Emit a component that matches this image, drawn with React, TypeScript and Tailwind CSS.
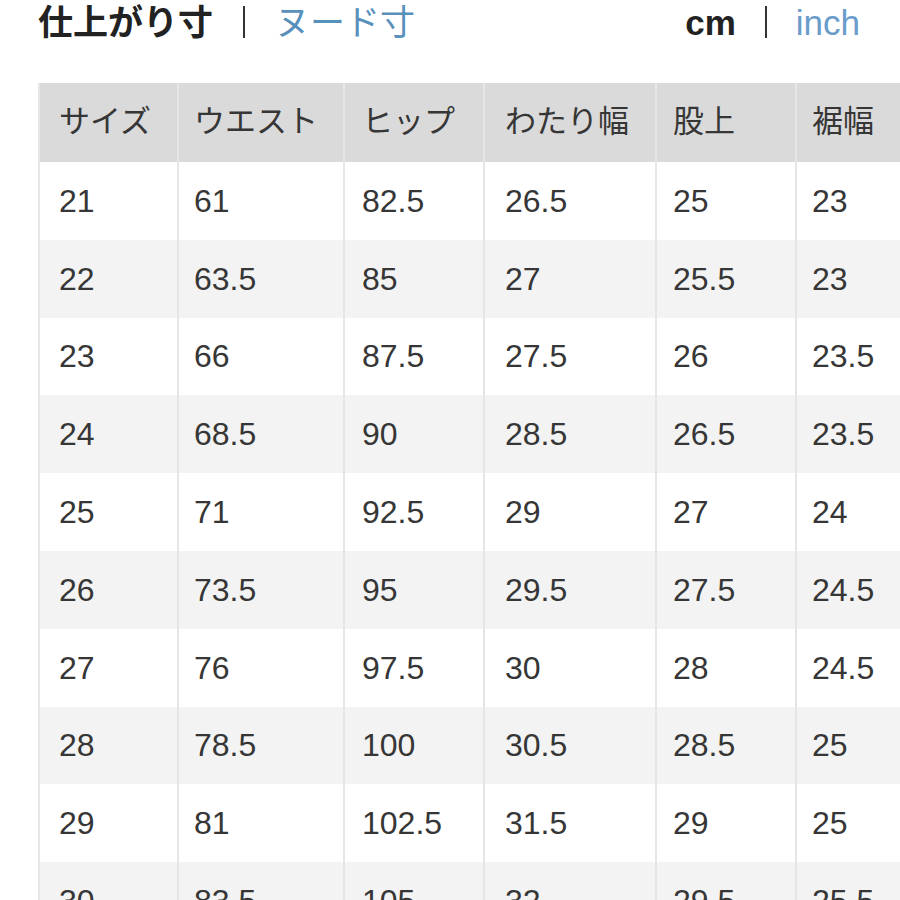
import React from 'react';

const HEADERS = ['サイズ', 'ウエスト', 'ヒップ', 'わたり幅', '股上', '裾幅'];

const ROWS = [
  ['21', '61', '82.5', '26.5', '25', '23'],
  ['22', '63.5', '85', '27', '25.5', '23'],
  ['23', '66', '87.5', '27.5', '26', '23.5'],
  ['24', '68.5', '90', '28.5', '26.5', '23.5'],
  ['25', '71', '92.5', '29', '27', '24'],
  ['26', '73.5', '95', '29.5', '27.5', '24.5'],
  ['27', '76', '97.5', '30', '28', '24.5'],
  ['28', '78.5', '100', '30.5', '28.5', '25'],
  ['29', '81', '102.5', '31.5', '29', '25'],
  ['30', '83.5', '105', '32', '29.5', '25.5'],
];

// left padding per column, to line the text up with the source page
const PAD = ['pl-[19px]', 'pl-[15px]', 'pl-[17px]', 'pl-[20px]', 'pl-[16px]', 'pl-[15px]'];

export default function App() {
  return (
    <div
      className="h-[900px] w-[900px] overflow-hidden bg-white pl-[38px] text-[#363636]"
      style={{ fontFamily: '"Liberation Sans", "Noto Sans CJK JP", sans-serif' }}
    >
      {/* Toggle bar */}
      <div className="flex h-[44px] w-[822px] items-center justify-between">
        <div className="flex items-center text-[35px] leading-none">
          <span className="font-bold text-[#222]">仕上がり寸</span>
          <span className="mx-[30px] h-[32px] w-[2px] bg-[#333]" />
          <span className="text-[#5790bb]">ヌード寸</span>
        </div>
        <div className="flex items-center text-[35px] leading-none">
          <span className="font-bold text-[#222]">cm</span>
          <span className="mx-[29px] h-[32px] w-[2px] bg-[#333]" />
          <span className="text-[#6a9ccb]">inch</span>
        </div>
      </div>

      {/* Size table */}
      <div className="mt-[39px] grid w-[862px] grid-cols-[137px_164px_138px_170px_138px_105px] gap-x-[2px] border-x-2 border-[#e6e6e6] bg-[#e6e6e6]">
        {HEADERS.map((h, j) => (
          <div
            key={h}
            className={`flex h-[79px] items-center bg-[#dadada] text-[31px] ${PAD[j]}`}
          >
            {h}
          </div>
        ))}
        {ROWS.map((row, i) =>
          row.map((cell, j) => (
            <div
              key={`${i}-${j}`}
              className={`flex h-[77.8px] items-center text-[32px] ${PAD[j]} ${
                i % 2 === 0 ? 'bg-white' : 'bg-[#f3f3f3]'
              }`}
            >
              {cell}
            </div>
          )),
        )}
      </div>
    </div>
  );
}
